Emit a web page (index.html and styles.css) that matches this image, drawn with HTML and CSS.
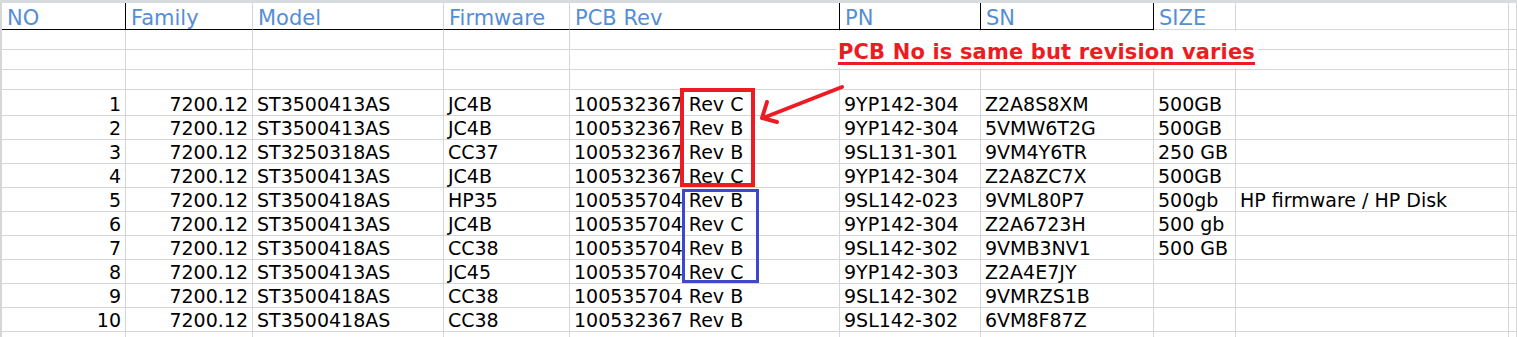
FILE: index.html
```html
<!DOCTYPE html>
<html>
<head>
<meta charset="utf-8">
<link rel="stylesheet" href="styles.css">
</head>
<body>
<div class="sheet">
  <div class="strip"></div>
  <div class="row head">
    <div class="c h hb hr">NO</div>
    <div class="c h hb">Family</div>
    <div class="c h hb">Model</div>
    <div class="c h hb">Firmware</div>
    <div class="c h hb hr">PCB Rev</div>
    <div class="c h hb hr">PN</div>
    <div class="c h hb hr">SN</div>
    <div class="c h">SIZE</div>
    <div class="c"></div>
    <div class="c"></div>
  </div>
  <div class="row empty"><div class="c"></div><div class="c"></div><div class="c"></div><div class="c"></div><div class="c"></div><div class="c"></div><div class="c"></div><div class="c"></div><div class="c"></div><div class="c"></div></div>
  <div class="row empty"><div class="c"></div><div class="c"></div><div class="c"></div><div class="c"></div><div class="c"></div><div class="c"></div><div class="c"></div><div class="c"></div><div class="c"></div><div class="c"></div></div>
  <div class="row empty"><div class="c"></div><div class="c"></div><div class="c"></div><div class="c"></div><div class="c"></div><div class="c"></div><div class="c"></div><div class="c"></div><div class="c"></div><div class="c"></div></div>

  <div class="row first"><div class="c n">1</div><div class="c n">7200.12</div><div class="c">ST3500413AS</div><div class="c">JC4B</div><div class="c">100532367 Rev C</div><div class="c">9YP142-304</div><div class="c">Z2A8S8XM</div><div class="c">500GB</div><div class="c"></div><div class="c"></div></div>
  <div class="row"><div class="c n">2</div><div class="c n">7200.12</div><div class="c">ST3500413AS</div><div class="c">JC4B</div><div class="c">100532367 Rev B</div><div class="c">9YP142-304</div><div class="c">5VMW6T2G</div><div class="c">500GB</div><div class="c"></div><div class="c"></div></div>
  <div class="row"><div class="c n">3</div><div class="c n">7200.12</div><div class="c">ST3250318AS</div><div class="c">CC37</div><div class="c">100532367 Rev B</div><div class="c">9SL131-301</div><div class="c">9VM4Y6TR</div><div class="c">250 GB</div><div class="c"></div><div class="c"></div></div>
  <div class="row"><div class="c n">4</div><div class="c n">7200.12</div><div class="c">ST3500413AS</div><div class="c">JC4B</div><div class="c">100532367 Rev C</div><div class="c">9YP142-304</div><div class="c">Z2A8ZC7X</div><div class="c">500GB</div><div class="c"></div><div class="c"></div></div>
  <div class="row"><div class="c n">5</div><div class="c n">7200.12</div><div class="c">ST3500418AS</div><div class="c">HP35</div><div class="c">100535704 Rev B</div><div class="c">9SL142-023</div><div class="c">9VML80P7</div><div class="c">500gb</div><div class="c">HP firmware / HP Disk</div><div class="c"></div></div>
  <div class="row"><div class="c n">6</div><div class="c n">7200.12</div><div class="c">ST3500413AS</div><div class="c">JC4B</div><div class="c">100535704 Rev C</div><div class="c">9YP142-304</div><div class="c">Z2A6723H</div><div class="c">500 gb</div><div class="c"></div><div class="c"></div></div>
  <div class="row"><div class="c n">7</div><div class="c n">7200.12</div><div class="c">ST3500418AS</div><div class="c">CC38</div><div class="c">100535704 Rev B</div><div class="c">9SL142-302</div><div class="c">9VMB3NV1</div><div class="c">500 GB</div><div class="c"></div><div class="c"></div></div>
  <div class="row"><div class="c n">8</div><div class="c n">7200.12</div><div class="c">ST3500413AS</div><div class="c">JC45</div><div class="c">100535704 Rev C</div><div class="c">9YP142-303</div><div class="c">Z2A4E7JY</div><div class="c"></div><div class="c"></div><div class="c"></div></div>
  <div class="row"><div class="c n">9</div><div class="c n">7200.12</div><div class="c">ST3500418AS</div><div class="c">CC38</div><div class="c">100535704 Rev B</div><div class="c">9SL142-302</div><div class="c">9VMRZS1B</div><div class="c"></div><div class="c"></div><div class="c"></div></div>
  <div class="row"><div class="c n">10</div><div class="c n">7200.12</div><div class="c">ST3500418AS</div><div class="c">CC38</div><div class="c">100532367 Rev B</div><div class="c">9SL142-302</div><div class="c">6VM8F87Z</div><div class="c"></div><div class="c"></div><div class="c"></div></div>
  <div class="row"><div class="c"></div><div class="c"></div><div class="c"></div><div class="c"></div><div class="c"></div><div class="c"></div><div class="c"></div><div class="c"></div><div class="c"></div><div class="c"></div></div>

  <div class="note">PCB No is same but revision varies</div>
  <div class="box red"></div>
  <div class="box blue"></div>
  <svg class="arrow" width="100" height="50" viewBox="0 0 100 50">
    <path d="M92 7 L13 38 M17 22 L12 38 L27 42" fill="none" stroke="#ed1c24" stroke-width="4" stroke-linecap="round" stroke-linejoin="round"/>
  </svg>
</div>
</body>
</html>
```
FILE: styles.css
```css
html, body {
  margin: 0;
  padding: 0;
  background: #ffffff;
}
body {
  font-family: "DejaVu Sans", Verdana, sans-serif;
  color: #000;
  overflow: hidden;
}
.sheet {
  position: relative;
  width: 1517px;
  height: 337px;
  overflow: hidden;
}
.strip {
  height: 3px;
  background: #d7dbe0;
}
.row {
  display: grid;
  grid-template-columns: 124px 127px 191px 126px 270px 141px 173px 82px 273px 8px;
  border-left: 2px solid #d4d6d8;
  height: 24px;
}
.row.head { height: 27px; }
.row.empty { height: 20px; }
.row.first { height: 26px; }
.c {
  box-sizing: border-box;
  border-right: 1px solid #d6d6d6;
  border-bottom: 1px solid #d6d6d6;
  display: flex;
  align-items: flex-end;
  padding: 0 0 1px 4px;
  font-size: 19px;
  line-height: 19px;
  white-space: nowrap;
  overflow: visible;
}
.c.n {
  justify-content: flex-end;
  padding: 0 4px 1px 0;
}
.c.h {
  color: #558ed5;
  font-size: 21px;
  line-height: 21px;
  padding: 0 0 0 5px;
}
.c.hb { border-bottom-color: #000; }
.c.hr { border-right-color: #000; }
.note {
  position: absolute;
  left: 836px;
  top: 31px;
  width: 422px;
  height: 37px;
  box-sizing: border-box;
  padding: 11px 0 0 2px;
  background: #fff;
  color: #ed1c24;
  font-weight: bold;
  font-size: 21px;
  line-height: 21px;
  letter-spacing: 0.15px;
  white-space: nowrap;
  text-decoration: underline;
  text-decoration-thickness: 3px;
  text-underline-offset: 3px;
}
.box {
  position: absolute;
  box-sizing: border-box;
}
.box.red {
  left: 680px;
  top: 88px;
  width: 75px;
  height: 99px;
  border: 4px solid #ed1c24;
}
.box.blue {
  left: 682px;
  top: 189px;
  width: 77px;
  height: 94px;
  border: 3px solid #3f48cc;
}
.arrow {
  position: absolute;
  left: 750px;
  top: 80px;
}
```
